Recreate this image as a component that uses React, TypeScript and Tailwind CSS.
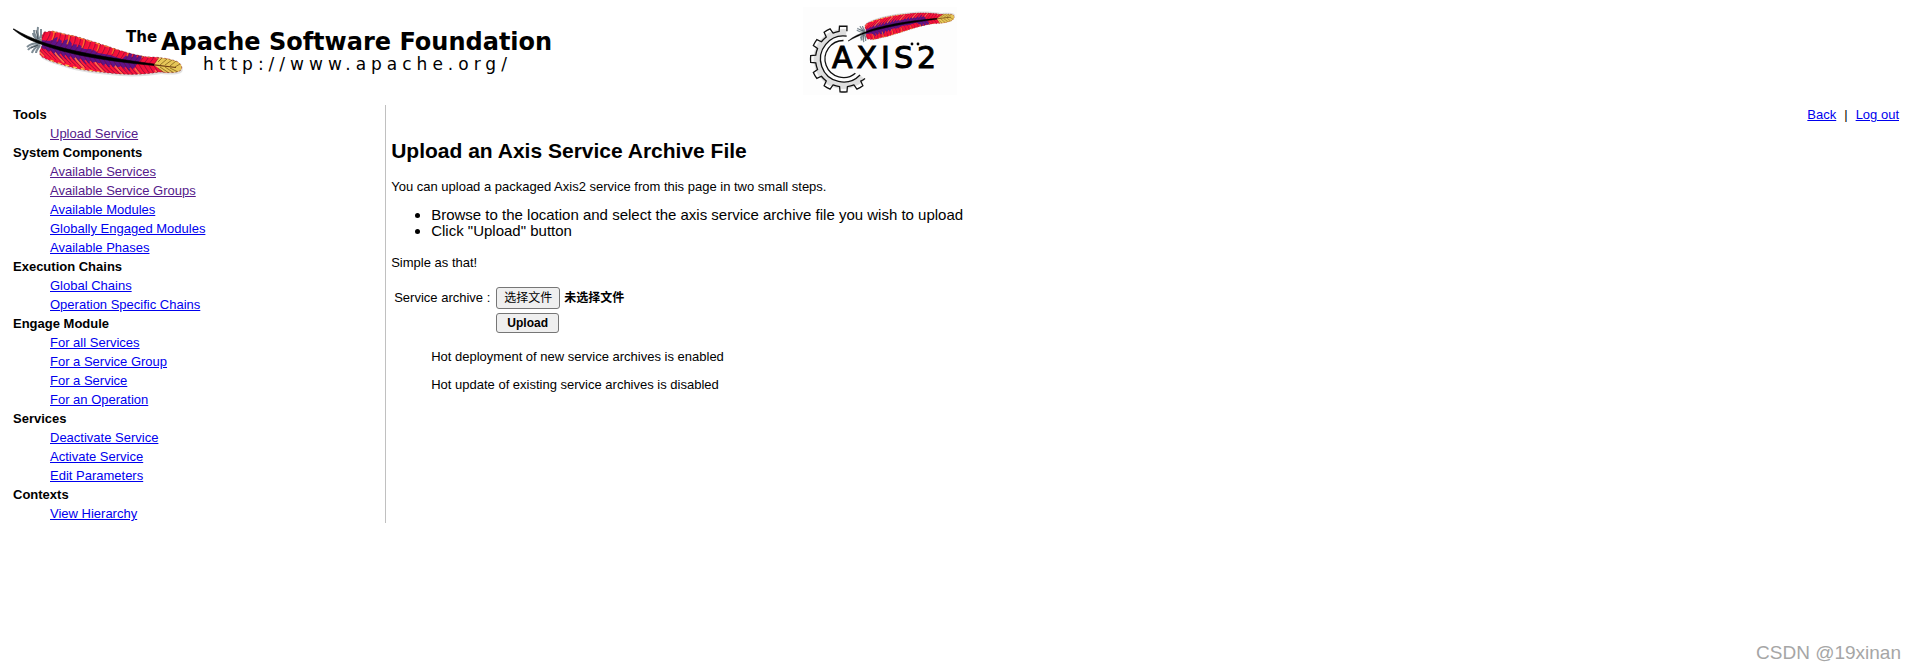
import { useRef, useState } from 'react'

interface NavLink {
  label: string
  visited?: boolean
}

interface NavSection {
  title: string
  links: NavLink[]
}

const SECTIONS: NavSection[] = [
  { title: 'Tools', links: [{ label: 'Upload Service', visited: true }] },
  {
    title: 'System Components',
    links: [
      { label: 'Available Services', visited: true },
      { label: 'Available Service Groups', visited: true },
      { label: 'Available Modules' },
      { label: 'Globally Engaged Modules' },
      { label: 'Available Phases' },
    ],
  },
  {
    title: 'Execution Chains',
    links: [{ label: 'Global Chains' }, { label: 'Operation Specific Chains' }],
  },
  {
    title: 'Engage Module',
    links: [
      { label: 'For all Services' },
      { label: 'For a Service Group' },
      { label: 'For a Service' },
      { label: 'For an Operation' },
    ],
  },
  {
    title: 'Services',
    links: [{ label: 'Deactivate Service' }, { label: 'Activate Service' }, { label: 'Edit Parameters' }],
  },
  { title: 'Contexts', links: [{ label: 'View Hierarchy' }] },
]

const VANE =
  'M44 22 L52 21 C62 23 68 25 75 26 C88 30 98 33 110 37 C124 42 138 46 150 47 C160 47 170 49 176 51 C181 53 183 57 181 60 C178 63 170 63 160 62 C148 64 134 65 120 64 C108 63 98 62 90 61 C78 59 68 57 60 54 C52 52 46 49 42 47 C39 45 39 42 41 38 C43 34 41 30 42 26 Z'

// y of the quill at a given x
function quillY(x: number) {
  return 33 + 22 * (1 - Math.pow(1 - (x - 40) / 140, 2))
}

function Feather({ id }: { id: string }) {
  const barbs = Array.from({ length: 27 }, (_, i) => 32 + i * 5)
  return (
    <g>
      <clipPath id={id}>
        <path d={VANE} />
      </clipPath>
      <path d={VANE} fill="#aaa" opacity="0.35" transform="translate(1 2)" />
      <g stroke="#7d8b94" strokeWidth="2" fill="none">
        <path d="M42 32 C38 28 37 22 38 17 M41 32 C35 28 34 24 34 20 M39 31 C36 29 33 26 33 23 M41 28 L41 19" />
        <path d="M40 33 C34 33 30 34 27 37 M40 34 C34 36 30 37 28 40 M40 34 C36 37 33 39 32 43 M40 35 C39 38 36 40 36 43" />
      </g>
      <path d="M38 29 L36 20 M38 35 L31 38" stroke="#26303a" strokeWidth="0.7" />
      <g clipPath={`url(#${id})`}>
        <path d={VANE} fill="#f4103a" />
        <path
          d="M40 30 L50 31 L57 27 L62 31 L69 29 L72 34 L80 35 L84 39 L92 39 L98 43 L110 45 L122 49 L131 41 L137 44 L144 45 L138 53 L134 58 L128 62 L122 57 L108 57 L96 52 L86 54 L74 50 L64 49 L54 45 L50 42 L42 38 Z"
          fill="#5f1488"
        />
        {barbs.map((x, i) => {
          const y = quillY(x)
          return (
            <g key={x} fill="none">
              <path
                d={`M${x + 5} ${y - 5} Q${x + 8} ${y - 10} ${x + 7} ${y - 20}`}
                stroke={i % 3 === 0 ? '#ff6a2a' : '#fb1a3c'}
                strokeWidth="1.6"
              />
              <path
                d={`M${x + 3} ${y + 6} Q${x + 6} ${y + 10} ${x + 12} ${y + 16}`}
                stroke={i % 4 === 0 ? '#ff6a4a' : '#fb1a3c'}
                strokeWidth="1.8"
              />
              <path
                d={`M${x + 2} ${y} Q${x + 10} ${y - 8} ${x + 9} ${y - 20} M${x + 1} ${y} Q${x + 5} ${y + 9} ${x + 14} ${y + 16}`}
                stroke="#6b0a3c"
                strokeWidth="0.6"
              />
            </g>
          )
        })}
        <path
          d="M52 21 L75 26 L110 37 L150 47"
          stroke="#ff8a3a"
          strokeWidth="2"
          strokeDasharray="5 4"
          fill="none"
        />
        <path
          d="M50 51 C60 55 80 60 100 63"
          stroke="#ffc24a"
          strokeWidth="3"
          strokeDasharray="4 4"
          fill="none"
        />
        <path d="M154 55 L161 45 L186 48 L186 66 L168 65 Z" fill="#e6c658" />
        <path
          d="M160 55 L167 49 M165 55 L172 50 M170 56 L176 51 M160 57 L169 63 M165 57 L174 63 M170 58 L178 62 M158 52 L162 48 M158 58 L164 63 M175 57 L180 54"
          stroke="#80601a"
          strokeWidth="0.8"
        />
      </g>
      <path d={VANE} fill="none" stroke="#6b2020" strokeWidth="0.5" strokeDasharray="2 2" />
      <path
        d="M13 19 C22 27 32 31 42 34.5 C66 43.5 100 50.5 154 55.5 L154 54 C105 47.5 70 41 42 32 C32 28 22 24 14 19 Z"
        fill="#000"
        stroke="#000"
        strokeWidth="0.6"
      />
      <path d="M154 54.8 L176 57.5" stroke="#6b3b12" strokeWidth="1.2" />
    </g>
  )
}

function ApacheLogo() {
  return (
    <svg viewBox="8 0 548 80" className="h-20 w-[548px] shrink-0" role="img" aria-label="The Apache Software Foundation">
      <Feather id="apache-vane" />
      <g fontFamily='"DejaVu Sans", Verdana, sans-serif' fill="#000">
        <text x="126" y="32" fontSize="15" fontWeight="700">
          The
        </text>
        <text x="161" y="40" fontSize="24" fontWeight="700">
          Apache Software Foundation
        </text>
        <text x="203" y="60" fontSize="17" className="tracking-[5px]">
          http://www.apache.org/
        </text>
      </g>
    </svg>
  )
}

const TEETH = [52, 82, 112, 142, 172, 202, 232]

function gearPoint(radius: number, degrees: number) {
  const a = (degrees * Math.PI) / 180
  return `${(48.5 + radius * Math.cos(a)).toFixed(2)} ${(59 + radius * Math.sin(a)).toFixed(2)}`
}

function gearPath() {
  let d = `M${gearPoint(29, 42)}`
  TEETH.forEach(t => {
    d += ` A28 28 0 0 1 ${gearPoint(28, t)} L${gearPoint(33, t + 2)} A33 33 0 0 1 ${gearPoint(33, t + 14)} L${gearPoint(28, t + 16)}`
  })
  d += ` A28 28 0 0 1 ${gearPoint(28, 261)} L${gearPoint(33, 263)} L${gearPoint(33, 276)} L${gearPoint(28, 277)}`
  d += ` M${gearPoint(23, 278)} A23 23 0 1 0 ${gearPoint(23, 44)}`
  return d
}

function AxisLogo() {
  return (
    <svg viewBox="8 7 154 88" className="h-[88px] w-[154px] shrink-0" role="img" aria-label="Axis2">
      <rect x="8" y="7" width="154" height="88" fill="#fdfdfd" />
      <path
        d={`M${gearPoint(26.5, 276)} A26.5 26.5 0 1 0 ${gearPoint(26.5, 44)}`}
        stroke="#dedede"
        strokeWidth="7"
        fill="none"
      />
      <path d={gearPath()} stroke="#111" strokeWidth="1.3" fill="none" />
      <path
        d={`M${gearPoint(18.5, 270)} A18.5 18.5 0 1 0 ${gearPoint(18.5, 50)}`}
        stroke="#111"
        strokeWidth="1.3"
        fill="none"
      />
      <g transform="translate(53 41) scale(0.63 -0.62) translate(-13 -19)">
        <Feather id="axis-vane" />
      </g>
      <text
        x="37"
        y="68"
        fontSize="30"
        fontFamily='"DejaVu Sans", sans-serif'
        fill="#000"
        stroke="#000"
        strokeWidth="1"
        className="tracking-[4px]"
      >
        AXIS2
      </text>
      <g fill="#000">
        <circle cx="117" cy="44" r="1.4" />
        <circle cx="123" cy="44" r="1.4" />
      </g>
    </svg>
  )
}

function Sidebar() {
  return (
    <nav className="w-1/5 shrink-0 border-r border-[#c0c0c0] pl-[5px] leading-[19px]">
      {SECTIONS.map(section => (
        <section key={section.title}>
          <h2 className="font-bold">{section.title}</h2>
          <ul className="pl-[37px]">
            {section.links.map(link => (
              <li key={link.label}>
                <a href="#" className={`underline ${link.visited ? 'text-[#551a8b]' : 'text-[#0000ee]'}`}>
                  {link.label}
                </a>
              </li>
            ))}
          </ul>
        </section>
      ))}
    </nav>
  )
}

function UploadForm() {
  const fileRef = useRef<HTMLInputElement>(null)
  const [fileName, setFileName] = useState('未选择文件')

  return (
    <form className="mt-3 ml-[3px] flex flex-col gap-1" onSubmit={e => e.preventDefault()}>
      <div className="flex items-center">
        <label htmlFor="archive" className="w-[102px]">
          Service archive :
        </label>
        <input
          ref={fileRef}
          id="archive"
          type="file"
          className="hidden"
          onChange={e => setFileName(e.target.files?.[0]?.name ?? '未选择文件')}
        />
        <button
          type="button"
          onClick={() => fileRef.current?.click()}
          className="h-[22px] w-16 rounded-[3px] border border-[#767676] bg-[#efefef] text-xs leading-4"
        >
          选择文件
        </button>
        <span className="ml-1 text-xs font-bold">{fileName}</span>
      </div>
      <button
        type="submit"
        className="ml-[102px] h-5 w-[63px] rounded-[3px] border border-[#767676] bg-[#efefef] text-xs leading-4 font-bold"
      >
        Upload
      </button>
    </form>
  )
}

export default function App() {
  return (
    <div className="flex min-h-screen flex-col bg-white font-['Liberation_Sans','Noto_Sans_CJK_SC',sans-serif] text-[13px] text-black">
      <header className="flex items-start px-2 pt-[7px]">
        <div className="w-[795px] pt-[3px]">
          <ApacheLogo />
        </div>
        <AxisLogo />
      </header>

      <div className="mt-[10px] flex pr-4 pl-2">
        <Sidebar />
        <main className="min-w-0 flex-1 pl-[5px]">
          <div className="flex justify-end gap-2 leading-[19px]">
            <a href="#" className="text-[#0000ee] underline">
              Back
            </a>
            <span>|</span>
            <a href="#" className="text-[#0000ee] underline">
              Log out
            </a>
          </div>
          <h1 className="mt-[15px] text-[21px] leading-6 font-bold">Upload an Axis Service Archive File</h1>
          <p className="mt-3 leading-6">You can upload a packaged Axis2 service from this page in two small steps.</p>
          <ul className="mt-2 list-disc pl-10 text-[15px] leading-4">
            <li>Browse to the location and select the axis service archive file you wish to upload</li>
            <li>Click &quot;Upload&quot; button</li>
          </ul>
          <p className="mt-3 leading-6">Simple as that!</p>
          <UploadForm />
          <div className="mt-3 flex flex-col gap-1 pl-10 leading-6">
            <p>Hot deployment of new service archives is enabled</p>
            <p>Hot update of existing service archives is disabled</p>
          </div>
        </main>
      </div>

      <footer className="mt-auto pr-[14px] pb-1 text-right text-[19px] leading-6 text-[#a6a6a6]">CSDN @19xinan</footer>
    </div>
  )
}
